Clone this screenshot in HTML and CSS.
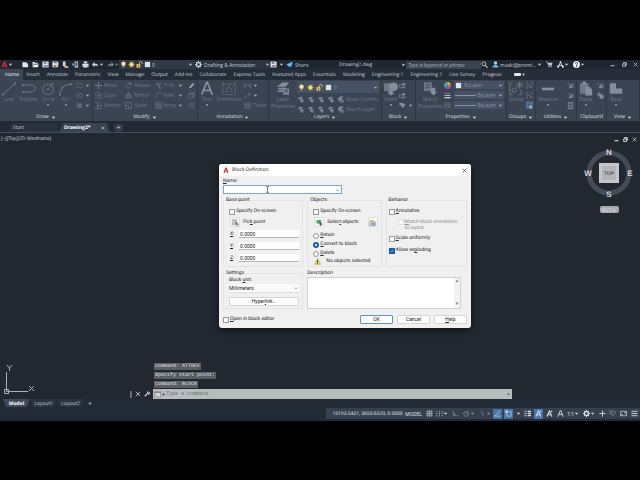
FILE: index.html
```
<!DOCTYPE html>
<html lang="en">
<head>
    <meta charset="UTF-8">
    <meta name="viewport" content="width=device-width, initial-scale=1.0">
    <title>Drawing2.dwg</title>
    <link rel="stylesheet" href="styles.css">
</head>
<body>
    <!-- Shared icons -->
    <svg class="sprite" aria-hidden="true">
        <symbol id="i-caret" viewBox="0 0 6 6"><path d="M1 2h4L3 4.500z" fill="currentColor"/></symbol>
        <symbol id="i-logo" viewBox="0 0 16 16"><path d="M1 15 6.500 1h3L15 15h-4l-1-3H6l2-3h1L8 5 5 15z" fill="#d0273d"/></symbol>
        <symbol id="i-new" viewBox="0 0 16 16"><path d="M1 3h9l4 4v7H1z" fill="#e4e8ee"/><path d="M10 3v4h4" fill="none" stroke="#8893a3"/></symbol>
        <symbol id="i-open" viewBox="0 0 16 16"><path d="M1 2h6l1 2h5v3H5l-4 6z" fill="#c3cad4"/><path d="M5 8h11l-3 6H1z" fill="#f2f4f7"/></symbol>
        <symbol id="i-save" viewBox="0 0 16 16"><path d="M1 1h13l1 2v12H1z" fill="#e0e5ec"/><path d="M4 1h8v5H4zM4 9h9v6H4z" fill="#6b7686"/><path d="M9 2h2v3H9zM5 11h6v1H5z" fill="#fff"/></symbol>
        <symbol id="i-saveas" viewBox="0 0 16 16"><path d="M1 1h12l1 2v11H1z" fill="#e0e5ec"/><path d="M4 1h7v4H4zM4 9h6v5H4z" fill="#6b7686"/><path d="m8 14 1-4 5-5 2 2-5 5z" fill="#e4b56c"/></symbol>
        <symbol id="i-web" viewBox="0 0 16 16"><path d="M2 1h6v11H2z" fill="#d4dae2"/><path d="M5 11h7v4H5z" fill="#e3b165"/><path d="M8 14h7" stroke="#fff" stroke-width="2"/></symbol>
        <symbol id="i-phone" viewBox="0 0 16 16"><path d="M6 1h8v14H6z" fill="#bec8d5"/><path d="M8 3h4v9H8z" fill="#3c4d66"/><path d="m1 4 5 4-5 4z" fill="#63b4ec"/></symbol>
        <symbol id="i-print" viewBox="0 0 16 16"><path d="M4 1h8v4H4zM1 6h14v7H1z" fill="#e6eaf0"/><path d="M4 10h8v5H4z" fill="#fff" stroke="#677486"/></symbol>
        <symbol id="i-undo" viewBox="0 0 16 16"><path d="M6 2v4h4q5 1 4 7-1-3-5-3H6v4L0 8z" fill="currentColor"/></symbol>
        <symbol id="i-redo" viewBox="0 0 16 16"><path d="M10 2v4H6q-5 1-4 7 1-3 5-3h3v4l6-6z" fill="currentColor"/></symbol>
        <symbol id="i-bulb" viewBox="0 0 16 16"><circle cx="8" cy="6" r="5" fill="#ffe28a"/><path d="M6 10h4v2H6z" fill="#ffe28a"/><path d="M6 13h4v2H6z" fill="#b8bec8"/></symbol>
        <symbol id="i-sun" viewBox="0 0 16 16"><path d="M8 0v16M0 8h16M2 2l12 12M14 2 2 14" stroke="#e0b54f" stroke-width="1"/><circle cx="8" cy="8" r="5" fill="#ffd876"/></symbol>
        <symbol id="i-lock" viewBox="0 0 16 16"><path d="M1 7h9v8H1z" fill="#f0c266"/><path d="M8 7V4q0-3 3-3t3 3v3" fill="none" stroke="#d8b878" stroke-width="2"/><path d="M5 9h2v4H5z" fill="#6e5524"/></symbol>
        <symbol id="i-square" viewBox="0 0 16 16"><path d="M2 2h12v12H2z" fill="#dfe2e8"/></symbol>
        <symbol id="i-gear" viewBox="0 0 16 16"><circle cx="8" cy="8" r="4.500" fill="none" stroke="currentColor" stroke-width="3"/><path d="M8 0v4M8 12v4M0 8h4M12 8h4M2.500 2.500l2 2M11.500 11.500l2 2M13.500 2.500l-2 2M4.500 11.500l-2 2" stroke="currentColor" stroke-width="2.500"/></symbol>
        <symbol id="i-plane" viewBox="0 0 16 16"><path d="M0 8 16 1l-4 14-5-4-2 4-1-5z" fill="#4aa6e8"/><path d="M4 10 14 3l-7 8" fill="#bfe1f8"/></symbol>
        <symbol id="i-search" viewBox="0 0 16 16"><circle cx="6.500" cy="6.500" r="4.500" fill="none" stroke="#c8d0da" stroke-width="2"/><path d="m10 10 5 5" stroke="#c8d0da" stroke-width="2.500"/></symbol>
        <symbol id="i-user" viewBox="0 0 16 16"><circle cx="8" cy="4.500" r="4" fill="#9bcdf2"/><path d="M1 15q0-6 7-6t7 6z" fill="#74b6e6"/></symbol>
        <symbol id="i-cart" viewBox="0 0 16 16"><path d="M0 2h3l3 8h7" fill="none" stroke="#c8d0da" stroke-width="1.500"/><path d="M4 4h11l-2 5H6z" fill="#c8d0da"/><circle cx="7" cy="13" r="1.500" fill="#c8d0da"/><circle cx="12" cy="13" r="1.500" fill="#c8d0da"/></symbol>
        <symbol id="i-app" viewBox="0 0 16 16"><path d="M8 2 3 14M8 2l5 12M4 10h8" fill="none" stroke="#e0e5ec" stroke-width="2"/><circle cx="8" cy="2.500" r="2" fill="#e0e5ec"/><circle cx="2.500" cy="13" r="2.500" fill="#e0e5ec"/><circle cx="13.500" cy="13" r="2.500" fill="#e0e5ec"/></symbol>
        <symbol id="i-help" viewBox="0 0 16 16"><circle cx="8" cy="8" r="8" fill="#eef1f5"/><path d="M5.500 6Q5.500 3.500 8 3.500T10.500 6 8 9v1.500" fill="none" stroke="#2b3646" stroke-width="2"/><path d="M7 11.500h2v2H7z" fill="#2b3646"/></symbol>
        <symbol id="i-min" viewBox="0 0 16 16"><path d="M2 12h12" stroke="currentColor" stroke-width="3"/></symbol>
        <symbol id="i-restore" viewBox="0 0 16 16"><path d="M5 5V2h9v8h-3M2 6h9v8H2z" fill="none" stroke="currentColor" stroke-width="2.500"/></symbol>
        <symbol id="i-close" viewBox="0 0 16 16"><path d="m2 2 12 12M14 2 2 14" stroke="currentColor" stroke-width="2"/></symbol>

        <symbol id="i-line" viewBox="0 0 16 16"><path d="M1 15 15 2" stroke="currentColor"/><path d="M0 14h2v2H0zM14 1h2v2h-2z" fill="currentColor"/></symbol>
        <symbol id="i-pline" viewBox="0 0 16 16"><path d="M1 4h9q5 0 5 4t-5 4H2" fill="none" stroke="currentColor"/><path d="M0 11h2v2H0zM0 3h2v2H0z" fill="currentColor"/></symbol>
        <symbol id="i-circle" viewBox="0 0 16 16"><circle cx="8" cy="9" r="6" fill="none" stroke="currentColor"/><path d="m8 9 5-6" stroke="currentColor"/><path d="M7 8h2v2H7zM12 2h2v2h-2z" fill="currentColor"/></symbol>
        <symbol id="i-arc" viewBox="0 0 16 16"><path d="M1 15Q2 3 14 3" fill="none" stroke="currentColor"/><path d="M0 14h2v2H0zM3 6h2v2H3zM13 2h2v2h-2z" fill="currentColor"/></symbol>
        <symbol id="i-rect" viewBox="0 0 16 16"><path d="M2 3h12v10H2z" fill="none" stroke="currentColor" stroke-width="1.500" stroke-dasharray="3 1"/></symbol>
        <symbol id="i-ellipse" viewBox="0 0 16 16"><ellipse cx="8" cy="8" rx="7" ry="5" fill="none" stroke="currentColor" stroke-width="1.500"/><path d="M7 7h2v2H7z" fill="currentColor"/></symbol>
        <symbol id="i-hatch" viewBox="0 0 16 16"><path d="M2 2h12v12H2z" fill="currentColor" opacity=".4"/><path d="M2 6h12M2 10h12M6 2v12M10 2v12" stroke="currentColor"/></symbol>
        <symbol id="i-move" viewBox="0 0 16 16"><path d="M8 0v16M0 8h16" stroke="currentColor" stroke-width="2"/><path d="m5 3 3-3 3 3zm0 10 3 3 3-3zM3 5 0 8l3 3zm10 0 3 3-3 3z" fill="currentColor"/></symbol>
        <symbol id="i-copy" viewBox="0 0 16 16"><circle cx="5" cy="5" r="4" fill="none" stroke="currentColor"/><circle cx="11" cy="11" r="4" fill="none" stroke="currentColor" stroke-width="1.500"/><path d="M11 1v4h4M1 11v4h4" stroke="currentColor" fill="none"/></symbol>
        <symbol id="i-stretch" viewBox="0 0 16 16"><path d="M1 1h5v14H1M6 8h9v7H6z" fill="none" stroke="currentColor" stroke-width="1.500"/><path d="M9 4h6" stroke="currentColor" stroke-dasharray="2 1"/></symbol>
        <symbol id="i-rotate" viewBox="0 0 16 16"><path d="M13 4A6 6 0 1 0 14 9" fill="none" stroke="currentColor" stroke-width="1.500"/><path d="M14 0v6H8z" fill="currentColor"/></symbol>
        <symbol id="i-mirror" viewBox="0 0 16 16"><path d="M6 3v10H0zM10 3v10h6z" fill="none" stroke="currentColor" stroke-width="1.500"/><path d="M8 0v16" stroke="currentColor"/></symbol>
        <symbol id="i-scale" viewBox="0 0 16 16"><path d="M1 1h14v14H1zM1 8h7v7" fill="none" stroke="currentColor" stroke-width="1.500"/></symbol>
        <symbol id="i-trim" viewBox="0 0 16 16"><path d="M1 5h5M6 1l4 14M14 1 8 10" stroke="currentColor" stroke-width="2"/><circle cx="12" cy="13" r="2" fill="none" stroke="currentColor"/></symbol>
        <symbol id="i-fillet" viewBox="0 0 16 16"><path d="M2 15V9q0-7 7-7h6" fill="none" stroke="currentColor" stroke-width="1.500"/></symbol>
        <symbol id="i-array" viewBox="0 0 16 16"><path d="M1 1h6v6H1zM9 1h6v6H9zM1 9h6v6H1zM9 9h6v6H9z" fill="none" stroke="currentColor" stroke-width="1.500"/></symbol>
        <symbol id="i-erase" viewBox="0 0 16 16"><path d="m2 13 9-11 3 3L6 14z" fill="#a3abb6"/></symbol>
        <symbol id="i-box" viewBox="0 0 16 16"><path d="M1 5h9v9H1zM1 5l4-3h10v8l-5 4M10 5l5-3" fill="none" stroke="currentColor" stroke-width="1.500"/></symbol>
        <symbol id="i-offset" viewBox="0 0 16 16"><path d="M15 3H7q-5 0-5 5t5 5h8M15 6H8q-3 0-3 2t3 2h7" fill="none" stroke="currentColor"/></symbol>
        <symbol id="i-text" viewBox="0 0 16 16"><path d="M2 15 7.500 1h1L14 15M4 10h8" fill="none" stroke="currentColor" stroke-width="2"/></symbol>
        <symbol id="i-dim" viewBox="0 0 16 16"><path d="M1 1v14M15 1v14M1 3h14M4 15h8" stroke="currentColor" stroke-dasharray="2 1"/><path d="m4 7 2 2m6-2-2 2M8 5v3m-4 4 2-1m6 1-2-1" stroke="currentColor"/></symbol>
        <symbol id="i-lin" viewBox="0 0 16 16"><path d="M2 2v12M14 2v12M2 8h12" stroke="currentColor" stroke-width="1.500"/></symbol>
        <symbol id="i-leader" viewBox="0 0 16 16"><path d="m2 14 6-8h4" stroke="currentColor" fill="none"/><circle cx="13" cy="5" r="2.500" fill="none" stroke="currentColor"/><path d="m1 15 1-5 3 3z" fill="currentColor"/></symbol>
        <symbol id="i-table" viewBox="0 0 16 16"><path d="M1 2h14v12H1zM1 6h14M1 10h14M6 2v12M11 2v12" fill="none" stroke="currentColor"/></symbol>
        <symbol id="i-layers" viewBox="0 0 16 16"><path d="m1 6 6-5h8l-4 5zM1 9l3-2h8l-2 2zm0 3 3-2h8l-2 2z" fill="currentColor"/><path d="M8 8h7v7H8z" fill="currentColor"/><path d="M9 10h5m-5 2h5" stroke="#3b4453"/></symbol>
        <symbol id="i-layer" viewBox="0 0 16 16"><path d="m1 6 5-4h8l-4 4zM5 8h6l2 2-3 4z" fill="currentColor"/><path d="M9 7h6v8H9z" fill="currentColor" opacity=".7"/></symbol>
        <symbol id="i-insert" viewBox="0 0 16 16"><path d="M0 2h8v9H0z" fill="currentColor" opacity=".7"/><circle cx="11" cy="6" r="5" fill="currentColor"/><path d="M5 10h5v3h2l-4 3-4-3h1z" fill="currentColor"/></symbol>
        <symbol id="i-block" viewBox="0 0 16 16"><path d="M1 6h7v7H1z" fill="none" stroke="currentColor" stroke-width="1.500"/><circle cx="11" cy="5" r="3" fill="currentColor"/><path d="m8 14 6-5v5z" fill="currentColor"/></symbol>
        <symbol id="i-tag" viewBox="0 0 16 16"><path d="M1 2h8l6 5-7 7-3-6H1z" fill="currentColor"/></symbol>
        <symbol id="i-match" viewBox="0 0 16 16"><path d="M1 1h9v10H1z" fill="currentColor" opacity=".7"/><path d="M3 4h5M3 7h5" stroke="#3b4453"/><path d="M9 7h5v5h2l-4 4-4-4h1z" fill="currentColor"/></symbol>
        <symbol id="i-wheel" viewBox="0 0 16 16"><path d="M8 8V0a8 8 0 0 1 7 4z" fill="#e8c33f"/><path d="m8 8 7-4a8 8 0 0 1 0 8z" fill="#e56c3e"/><path d="m8 8 7 4a8 8 0 0 1-7 4z" fill="#cf4f9e"/><path d="M8 8v8a8 8 0 0 1-7-4z" fill="#6a66d0"/><path d="m8 8-7 4a8 8 0 0 1 0-8z" fill="#38a7dc"/><path d="M8 8 1 4a8 8 0 0 1 7-4z" fill="#59bd66"/></symbol>
        <symbol id="i-lines" viewBox="0 0 16 16"><path d="M1 3h14" stroke="currentColor"/><path d="M1 8h14" stroke="currentColor" stroke-width="2"/><path d="M1 13h14" stroke="currentColor" stroke-width="3"/></symbol>
        <symbol id="i-group" viewBox="0 0 16 16"><path d="M4 2H1v13h3M11 15h3V9" fill="none" stroke="currentColor"/><circle cx="6" cy="10" r="2.500" fill="none" stroke="currentColor"/><path d="M12 0v8M8 4h8M9 1l6 6M15 1 9 7" stroke="currentColor"/></symbol>
        <symbol id="i-ungroup" viewBox="0 0 16 16"><path d="M5 1H2v13h3M11 1h3v5M8 4v4H5m4 1 5 5m-5 0 5-5" fill="none" stroke="currentColor" stroke-width="1.500"/></symbol>
        <symbol id="i-select" viewBox="0 0 16 16"><path d="M2 2h12v11H2z" fill="none" stroke="currentColor" stroke-dasharray="2 1"/><path d="m8 6 7 6h-3l1 3-2 1-1-3-2 2z" fill="currentColor"/></symbol>
        <symbol id="i-measure" viewBox="0 0 16 16"><path d="M1 7h14v3H1z" fill="currentColor"/></symbol>
        <symbol id="i-calc" viewBox="0 0 16 16"><path d="M3 1h10v14H3z" fill="none" stroke="currentColor" stroke-width="2"/><path d="M5 4h6M5 8h6M5 11h6" stroke="currentColor" stroke-width="1.500"/></symbol>
        <symbol id="i-quick" viewBox="0 0 16 16"><path d="M1 3h5M1 6h4" stroke="currentColor"/><path d="M7 4h8v10H7z" fill="currentColor" opacity=".6"/><path d="m4 14 3-8 3 8z" fill="currentColor"/></symbol>
        <symbol id="i-paste" viewBox="0 0 16 16"><path d="M1 2h10v12H1z" fill="currentColor" opacity=".7"/><path d="M4 0h4v4H4zM7 6h5l3 3v7H7z" fill="currentColor"/></symbol>
        <symbol id="i-pages" viewBox="0 0 16 16"><path d="M1 1h7v9H1z" fill="currentColor" opacity=".7"/><path d="M6 5h5l4 4v6H6z" fill="currentColor"/></symbol>
        <symbol id="i-base" viewBox="0 0 16 16"><path d="M1 2h7v6h7v6H1z" fill="currentColor"/></symbol>

        <symbol id="i-grid" viewBox="0 0 16 16"><path d="M4 0v16M8 0v16M12 0v16M0 4h16M0 8h16M0 12h16" stroke="currentColor"/></symbol>
        <symbol id="i-dots" viewBox="0 0 16 16"><path d="M1 2h2v2H1zM7 2h2v2H7zM13 2h2v2h-2zM1 7h2v2H1zM7 7h2v2H7zM13 7h2v2h-2zM1 12h2v2H1zM7 12h2v2H7zM13 12h2v2h-2z" fill="currentColor"/></symbol>
        <symbol id="i-ortho" viewBox="0 0 16 16"><path d="M3 1v12h12M3 9h4v4" fill="none" stroke="currentColor" stroke-width="1.500"/></symbol>
        <symbol id="i-polar" viewBox="0 0 16 16"><circle cx="7" cy="9" r="5.500" fill="none" stroke="currentColor" stroke-width="1.500"/><path d="M7 9h8M7 9l6-8" stroke="currentColor"/></symbol>
        <symbol id="i-iso" viewBox="0 0 16 16"><path d="M8 1v14M3 4l5 4 4 4" stroke="currentColor" fill="none"/></symbol>
        <symbol id="i-track" viewBox="0 0 16 16"><path d="M1 14h14M2 14 14 2" stroke="currentColor" stroke-width="1.500"/></symbol>
        <symbol id="i-snap" viewBox="0 0 16 16"><path d="M4 4h10v10H4z" fill="none" stroke="currentColor" stroke-width="1.500"/><path d="M1 1h5v5H1z" fill="currentColor"/></symbol>
        <symbol id="i-weight" viewBox="0 0 16 16"><path d="M0 3h8M0 8h8M0 13h8" stroke="currentColor" stroke-width="1.500"/><path d="M9 3h7M9 8h7M9 13h7" stroke="currentColor" stroke-width="3"/></symbol>
        <symbol id="i-anno" viewBox="0 0 16 16"><path d="M2 15 8 2l5 13M4 11h7" fill="none" stroke="currentColor" stroke-width="2.500"/><path d="m11 1 4 1-3 4z" fill="currentColor"/></symbol>
        <symbol id="i-plus" viewBox="0 0 16 16"><path d="M8 1v14M1 8h14" stroke="currentColor" stroke-width="2"/></symbol>
        <symbol id="i-isolate" viewBox="0 0 16 16"><path d="M1 2h6v6H1zM9 3h5v5l-5 6-4-5" fill="none" stroke="currentColor" stroke-width="1.500"/></symbol>
        <symbol id="i-clean" viewBox="0 0 16 16"><path d="M1 3h14v10H1z" fill="none" stroke="currentColor" stroke-width="1.500"/><path d="M9 5h4v4zM3 8v3h4z" fill="currentColor"/></symbol>
        <symbol id="i-menu" viewBox="0 0 16 16"><path d="M1 3h14M1 8h14M1 13h14" stroke="currentColor" stroke-width="2"/></symbol>
        <symbol id="i-wrench" viewBox="0 0 16 16"><path d="m2 14 7-7" stroke="currentColor" stroke-width="3"/><path d="M14 2 12 5l-2-2 2-2Q8 0 8 4t4 5q4 0 4-4z" fill="currentColor"/></symbol>
        <symbol id="i-console" viewBox="0 0 16 16"><path d="M1 2h14v12H1z" fill="#d8d8d8" stroke="#666"/><path d="M1 3h14" stroke="#666" stroke-width="2"/><path d="m3 7 3 2-3 2M7 12h4" fill="none" stroke="#666"/></symbol>
        <symbol id="i-ibeam" viewBox="0 0 16 16"><path d="M5 1q3 0 3 2 0-2 3-2M8 3v10M5 15q3 0 3-2 0 2 3 2" fill="none" stroke="#333" stroke-width="1.500"/></symbol>
        <symbol id="i-pick" viewBox="0 0 16 16"><path d="M1 1h10v12H1z" fill="#d7dce0" stroke="#727a80"/><path d="M3 4h6M3 7h6M3 10h6" stroke="#8e979c"/><path d="m7 5 7 6-3 1-1 3z" fill="#8b4c74"/><path d="M10 12h5v3h-5z" fill="#5c8f4e"/></symbol>
        <symbol id="i-objects" viewBox="0 0 16 16"><path d="M1 2h11v8H1z" fill="#45ad6b"/><path d="m8 6 7 6-3 1-1 3-3-3z" fill="#3d5060"/></symbol>
        <symbol id="i-qselect" viewBox="0 0 16 16"><path d="M1 6h14v9H1z" fill="#d3dae2" stroke="#75818e"/><path d="M6 8h7v6H6z" fill="#789bc4"/><path d="m2 1 5 2 4-2-2 5-5 1z" fill="#e5a83a"/></symbol>
        <symbol id="i-warn" viewBox="0 0 16 16"><path d="M8 1 15 14.500H1z" fill="#e5ed2c" stroke="#83862c"/><path d="M8 5v5M8 11.500v2" stroke="#222" stroke-width="2"/></symbol>
    </svg>

    <div class="app">
        <!-- Title bar -->
        <header class="titlebar">
            <div class="quick">
                <button class="logo" aria-label="Application menu"><svg><use href="#i-logo"/></svg><svg class="caret"><use href="#i-caret"/></svg></button>
                <button aria-label="New"><svg><use href="#i-new"/></svg></button>
                <button aria-label="Open"><svg><use href="#i-open"/></svg></button>
                <button aria-label="Save"><svg><use href="#i-save"/></svg></button>
                <button aria-label="Save as"><svg><use href="#i-saveas"/></svg></button>
                <button aria-label="Open from web"><svg><use href="#i-web"/></svg></button>
                <button aria-label="Save to mobile"><svg><use href="#i-phone"/></svg></button>
                <button aria-label="Plot"><svg><use href="#i-print"/></svg></button>
                <button aria-label="Undo"><svg><use href="#i-undo"/></svg><svg class="caret"><use href="#i-caret"/></svg></button>
                <button class="off" aria-label="Redo"><svg><use href="#i-redo"/></svg><svg class="caret"><use href="#i-caret"/></svg></button>
            </div>
            <button class="layer-combo" aria-label="Layer">
                <svg><use href="#i-bulb"/></svg><svg><use href="#i-sun"/></svg><svg><use href="#i-lock"/></svg><svg><use href="#i-square"/></svg><span>0</span><svg class="caret push"><use href="#i-caret"/></svg>
            </button>
            <button class="workspace"><svg><use href="#i-gear"/></svg><span>Drafting &amp; Annotation</span><svg class="caret push"><use href="#i-caret"/></svg></button>
            <div class="share">
                <button aria-label="Save workspace"><svg><use href="#i-save"/></svg></button>
                <button aria-label="Customize"><svg class="caret"><use href="#i-caret"/></svg></button>
                <button class="share-btn"><svg><use href="#i-plane"/></svg>Share</button>
            </div>
            <div class="doc-title"><span>Drawing2.dwg</span><span class="arrow">▸</span></div>
            <input class="search" type="text" placeholder="Type a keyword or phrase" aria-label="Search">
            <div class="account">
                <button aria-label="Search help"><svg><use href="#i-search"/></svg></button>
                <button class="user"><svg><use href="#i-user"/></svg>mzaki@promi...<svg class="caret"><use href="#i-caret"/></svg></button>
                <button aria-label="Store"><svg><use href="#i-cart"/></svg></button>
                <button aria-label="Apps"><svg><use href="#i-app"/></svg><svg class="caret"><use href="#i-caret"/></svg></button>
                <button aria-label="Help"><svg><use href="#i-help"/></svg><svg class="caret"><use href="#i-caret"/></svg></button>
            </div>
            <div class="window-btns">
                <button aria-label="Minimize"><svg><use href="#i-min"/></svg></button>
                <button aria-label="Restore"><svg><use href="#i-restore"/></svg></button>
                <button aria-label="Close"><svg><use href="#i-close"/></svg></button>
            </div>
        </header>

        <!-- Ribbon tabs -->
        <nav class="ribbon-tabs">
            <a class="active" href="#">Home</a>
            <a href="#">Insert</a>
            <a href="#">Annotate</a>
            <a href="#">Parametric</a>
            <a href="#">View</a>
            <a href="#">Manage</a>
            <a href="#">Output</a>
            <a href="#">Add-ins</a>
            <a href="#">Collaborate</a>
            <a href="#">Express Tools</a>
            <a href="#">Featured Apps</a>
            <a href="#">Essentials</a>
            <a href="#">Modeling</a>
            <a href="#">Engineering 1</a>
            <a href="#">Engineering 2</a>
            <a href="#">Live Survey</a>
            <a href="#">Progeox</a>
            <button class="ribbon-toggle" aria-label="Minimize ribbon"><span class="pill"></span><svg class="caret"><use href="#i-caret"/></svg></button>
        </nav>

        <!-- Ribbon panels -->
        <div class="ribbon">
            <section class="panel">
                <div class="tools">
                    <button class="big"><svg><use href="#i-line"/></svg>Line</button>
                    <button class="big"><svg><use href="#i-pline"/></svg>Polyline</button>
                    <button class="big"><svg><use href="#i-circle"/></svg>Circle<svg class="caret"><use href="#i-caret"/></svg></button>
                    <button class="big"><svg><use href="#i-arc"/></svg>Arc<svg class="caret"><use href="#i-caret"/></svg></button>
                    <div class="stack">
                        <button aria-label="Rectangle"><svg><use href="#i-rect"/></svg><svg class="caret"><use href="#i-caret"/></svg></button>
                        <button aria-label="Ellipse"><svg><use href="#i-ellipse"/></svg><svg class="caret"><use href="#i-caret"/></svg></button>
                        <button aria-label="Hatch"><svg><use href="#i-hatch"/></svg><svg class="caret"><use href="#i-caret"/></svg></button>
                    </div>
                </div>
                <h2>Draw <svg class="caret"><use href="#i-caret"/></svg></h2>
            </section>
            <section class="panel">
                <div class="tools">
                    <div class="stack">
                        <button><svg><use href="#i-move"/></svg>Move</button>
                        <button><svg><use href="#i-copy"/></svg>Copy</button>
                        <button><svg><use href="#i-stretch"/></svg>Stretch</button>
                    </div>
                    <div class="stack">
                        <button><svg><use href="#i-rotate"/></svg>Rotate</button>
                        <button><svg><use href="#i-mirror"/></svg>Mirror</button>
                        <button><svg><use href="#i-scale"/></svg>Scale</button>
                    </div>
                    <div class="stack">
                        <button><svg><use href="#i-trim"/></svg>Trim<svg class="caret push"><use href="#i-caret"/></svg></button>
                        <button><svg><use href="#i-fillet"/></svg>Fillet<svg class="caret push"><use href="#i-caret"/></svg></button>
                        <button><svg><use href="#i-array"/></svg>Array<svg class="caret push"><use href="#i-caret"/></svg></button>
                    </div>
                    <div class="stack">
                        <button aria-label="Erase"><svg><use href="#i-erase"/></svg></button>
                        <button aria-label="Explode"><svg><use href="#i-box"/></svg></button>
                        <button aria-label="Offset"><svg><use href="#i-offset"/></svg></button>
                    </div>
                </div>
                <h2>Modify <svg class="caret"><use href="#i-caret"/></svg></h2>
            </section>
            <section class="panel">
                <div class="tools">
                    <button class="big bright"><svg><use href="#i-text"/></svg>Text<svg class="caret"><use href="#i-caret"/></svg></button>
                    <button class="big"><svg><use href="#i-dim"/></svg>Dimension</button>
                    <div class="stack">
                        <button aria-label="Linear"><svg><use href="#i-lin"/></svg><svg class="caret"><use href="#i-caret"/></svg></button>
                        <button aria-label="Leader"><svg><use href="#i-leader"/></svg><svg class="caret"><use href="#i-caret"/></svg></button>
                        <button><svg><use href="#i-table"/></svg>Table</button>
                    </div>
                </div>
                <h2>Annotation <svg class="caret"><use href="#i-caret"/></svg></h2>
            </section>
            <section class="panel">
                <div class="tools">
                    <button class="big bright"><svg><use href="#i-layers"/></svg><span>Layer<br>Properties</span></button>
                    <div class="stack wide bright">
                        <button class="combo" aria-label="Current layer"><svg><use href="#i-bulb"/></svg><svg><use href="#i-sun"/></svg><svg><use href="#i-lock"/></svg><svg><use href="#i-square"/></svg>0<svg class="caret push"><use href="#i-caret"/></svg></button>
                        <div class="row">
                            <button aria-label="Off"><svg><use href="#i-layer"/></svg></button>
                            <button aria-label="Isolate"><svg><use href="#i-layer"/></svg></button>
                            <button aria-label="Freeze"><svg><use href="#i-layer"/></svg></button>
                            <button aria-label="Lock"><svg><use href="#i-layer"/></svg></button>
                            <button><svg><use href="#i-layers"/></svg>Make Current</button>
                        </div>
                        <div class="row">
                            <button aria-label="Turn all on"><svg><use href="#i-layer"/></svg></button>
                            <button aria-label="Unisolate"><svg><use href="#i-layer"/></svg></button>
                            <button aria-label="Thaw"><svg><use href="#i-layer"/></svg></button>
                            <button aria-label="Unlock"><svg><use href="#i-layer"/></svg></button>
                            <button><svg><use href="#i-layers"/></svg>Match Layer</button>
                        </div>
                    </div>
                </div>
                <h2>Layers <svg class="caret"><use href="#i-caret"/></svg></h2>
            </section>
            <section class="panel">
                <div class="tools">
                    <button class="big bright"><svg><use href="#i-insert"/></svg>Insert<svg class="caret"><use href="#i-caret"/></svg></button>
                    <div class="stack bright">
                        <button aria-label="Create block"><svg><use href="#i-block"/></svg></button>
                        <button aria-label="Edit block"><svg><use href="#i-block"/></svg></button>
                        <button aria-label="Edit attributes"><svg><use href="#i-tag"/></svg><svg class="caret"><use href="#i-caret"/></svg></button>
                    </div>
                </div>
                <h2>Block <svg class="caret"><use href="#i-caret"/></svg></h2>
            </section>
            <section class="panel">
                <div class="tools">
                    <button class="big bright"><svg><use href="#i-match"/></svg><span>Match<br>Properties</span></button>
                    <div class="stack wide">
                        <div class="row"><svg><use href="#i-wheel"/></svg><button class="combo" aria-label="Color"><svg><use href="#i-square"/></svg>ByLayer<svg class="caret push"><use href="#i-caret"/></svg></button></div>
                        <div class="row"><svg class="light"><use href="#i-lines"/></svg><button class="combo" aria-label="Lineweight"><span class="rule"></span>ByLayer<svg class="caret push"><use href="#i-caret"/></svg></button></div>
                        <div class="row"><svg><use href="#i-table"/></svg><button class="combo" aria-label="Linetype"><span class="rule"></span>ByLayer<svg class="caret push"><use href="#i-caret"/></svg></button></div>
                    </div>
                </div>
                <h2>Properties <svg class="caret"><use href="#i-caret"/></svg></h2>
            </section>
            <section class="panel">
                <div class="tools">
                    <button class="big"><svg><use href="#i-group"/></svg>Group</button>
                    <div class="stack">
                        <button aria-label="Ungroup"><svg><use href="#i-ungroup"/></svg></button>
                        <button aria-label="Group edit"><svg><use href="#i-ungroup"/></svg></button>
                        <button class="on" aria-label="Group selection"><svg><use href="#i-select"/></svg></button>
                    </div>
                </div>
                <h2>Groups <svg class="caret"><use href="#i-caret"/></svg></h2>
            </section>
            <section class="panel">
                <div class="tools">
                    <button class="big bright"><svg><use href="#i-measure"/></svg>Measure<svg class="caret"><use href="#i-caret"/></svg></button>
                    <div class="stack bright">
                        <button aria-label="Quick select"><svg><use href="#i-quick"/></svg></button>
                        <button aria-label="Select all"><svg><use href="#i-quick"/></svg></button>
                        <button aria-label="Calculator"><svg><use href="#i-calc"/></svg></button>
                    </div>
                </div>
                <h2>Utilities <svg class="caret"><use href="#i-caret"/></svg></h2>
            </section>
            <section class="panel">
                <div class="tools">
                    <button class="big bright"><svg><use href="#i-paste"/></svg>Paste<svg class="caret"><use href="#i-caret"/></svg></button>
                    <div class="stack bright">
                        <button aria-label="Cut"><svg><use href="#i-quick"/></svg></button>
                        <button aria-label="Copy clip"><svg><use href="#i-pages"/></svg></button>
                    </div>
                </div>
                <h2>Clipboard</h2>
            </section>
            <section class="panel">
                <div class="tools">
                    <button class="big bright"><svg><use href="#i-base"/></svg>Base<svg class="caret"><use href="#i-caret"/></svg></button>
                </div>
                <h2>View <svg class="caret"><use href="#i-caret"/></svg></h2>
            </section>
        </div>

        <!-- Drawing tabs -->
        <nav class="doc-tabs">
            <a href="#">Start</a>
            <a class="active" href="#">Drawing2*<svg><use href="#i-close"/></svg></a>
            <button aria-label="New drawing">+</button>
        </nav>

        <!-- Drawing area -->
        <main class="canvas">
            <div class="view-label">[−][Top][2D Wireframe]</div>
            <div class="view-btns">
                <button aria-label="Minimize view"><svg><use href="#i-min"/></svg></button>
                <button aria-label="Restore view"><svg><use href="#i-restore"/></svg></button>
                <button aria-label="Close view"><svg><use href="#i-close"/></svg></button>
            </div>

            <div class="viewcube">
                <svg class="compass" viewBox="0 0 50 50">
                    <circle cx="25" cy="25" r="20" fill="none" stroke="#454c57" stroke-width="5"/>
                    <path d="M15 15h20v20H15z" fill="#c4c6c8"/>
                    <path d="M18 18h14v14H18z" fill="#b2b5b9"/>
                    <g class="compass-text" text-anchor="middle">
                        <text x="25" y="7">N</text>
                        <text x="4" y="28">W</text>
                        <text x="46" y="28">E</text>
                        <text x="25" y="49">S</text>
                        <text class="face" x="25" y="27">TOP</text>
                    </g>
                </svg>
                <button class="wcs">WCS ▾</button>
            </div>

            <svg class="ucs" viewBox="0 0 36 34">
                <path d="M6.500 10v19.500H28M4.500 27.500h4v4h-4z" fill="none" stroke="#a9b0b8"/>
                <path d="m7 3 2.500 3L12 3M9.500 6v3M29 24l5 5M34 24l-5 5" fill="none" stroke="#a9b0b8"/>
            </svg>

            <div class="command">
                <div class="history">
                    <span>Command: ATTDEF</span>
                    <span>Specify start point:</span>
                    <span>Command: BLOCK</span>
                </div>
                <div class="command-bar">
                    <span class="grip"></span>
                    <button aria-label="Close command line"><svg><use href="#i-close"/></svg></button>
                    <button aria-label="Customize command line"><svg><use href="#i-wrench"/></svg></button>
                    <label class="command-input"><svg><use href="#i-console"/></svg><svg class="caret"><use href="#i-caret"/></svg><input type="text" placeholder="Type a command" aria-label="Command"><span>▴</span></label>
                </div>
            </div>

            <!-- Block definition dialog -->
            <form class="dialog" role="dialog" aria-labelledby="dialog-title">
                <div class="dialog-head">
                    <svg><use href="#i-logo"/></svg>
                    <h1 id="dialog-title">Block Definition</h1>
                    <button type="button" aria-label="Close dialog"><svg><use href="#i-close"/></svg></button>
                </div>
                <div class="dialog-body">
                    <div class="name-field">
                        <label for="block-name"><u>N</u>ame:</label>
                        <select id="block-name"><option></option></select>
                        <svg class="ibeam"><use href="#i-ibeam"/></svg>
                    </div>
                    <div class="groups">
                        <fieldset>
                            <legend>Base point</legend>
                            <label class="check"><input type="checkbox">Specify On-screen</label>
                            <div class="pick"><button type="button" aria-label="Pick point"><svg><use href="#i-pick"/></svg></button><span>Pic<u>k</u> point</span></div>
                            <div class="coord"><label for="x"><u>X</u>:</label><input id="x" type="text" value="0.0000"></div>
                            <div class="coord"><label for="y"><u>Y</u>:</label><input id="y" type="text" value="0.0000"></div>
                            <div class="coord"><label for="z"><u>Z</u>:</label><input id="z" type="text" value="0.0000"></div>
                        </fieldset>
                        <fieldset>
                            <legend>Objects</legend>
                            <label class="check"><input type="checkbox">Specify On-screen</label>
                            <div class="pick"><button type="button" aria-label="Select objects"><svg><use href="#i-objects"/></svg></button><span>Selec<u>t</u> objects</span><button class="push" type="button" aria-label="Quick select objects"><svg><use href="#i-qselect"/></svg></button></div>
                            <div class="modes">
                                <label class="check"><input type="radio" name="mode"><span><u>R</u>etain</span></label>
                                <label class="check"><input type="radio" name="mode" checked><span><u>C</u>onvert to block</span></label>
                                <label class="check"><input type="radio" name="mode"><span><u>D</u>elete</span></label>
                                <div class="warn"><svg><use href="#i-warn"/></svg>No objects selected</div>
                            </div>
                        </fieldset>
                        <fieldset class="behavior">
                            <legend>Behavior</legend>
                            <label class="check"><input type="checkbox"><span><u>A</u>nnotative</span></label>
                            <label class="check sub"><input type="checkbox" disabled><span><u>M</u>atch block orientation<br>to layout</span></label>
                            <label class="check"><input type="checkbox"><span><u>S</u>cale uniformly</span></label>
                            <label class="check"><input type="checkbox" checked><span>Allow ex<u>p</u>loding</span></label>
                        </fieldset>
                    </div>
                    <div class="lower">
                        <fieldset class="settings">
                            <legend>Settings</legend>
                            <label for="unit">Block <u>u</u>nit:</label>
                            <select id="unit"><option>Millimeters</option></select>
                            <button class="btn" type="button">Hyper<u>l</u>ink...</button>
                        </fieldset>
                        <div class="description">
                            <label for="desc">Description</label>
                            <div class="desc-box"><textarea id="desc"></textarea><div class="scroll"><span>▴</span><span>▾</span></div></div>
                        </div>
                    </div>
                    <div class="dialog-foot">
                        <label class="check"><input type="checkbox"><span><u>O</u>pen in block editor</span></label>
                        <button class="btn primary" type="button">OK</button>
                        <button class="btn" type="button">Cancel</button>
                        <button class="btn" type="button"><u>H</u>elp</button>
                    </div>
                </div>
            </form>
        </main>

        <!-- Layout tabs and status bar -->
        <footer class="bottom">
            <nav class="layout-tabs">
                <a class="active" href="#">Model</a>
                <a href="#">Layout1</a>
                <a href="#">Layout2</a>
                <button aria-label="New layout">+</button>
            </nav>
            <div class="status">
                <span class="coords">15193.5431, 3650.6320, 0.0000</span>
                <button class="model">MODEL</button>
                <button aria-label="Grid"><svg><use href="#i-grid"/></svg></button>
                <button aria-label="Snap"><svg><use href="#i-dots"/></svg><svg class="caret"><use href="#i-caret"/></svg></button>
                <button class="off" aria-label="Ortho"><svg><use href="#i-ortho"/></svg></button>
                <button class="off" aria-label="Polar"><svg><use href="#i-polar"/></svg><svg class="caret"><use href="#i-caret"/></svg></button>
                <button class="off" aria-label="Isoplane"><svg><use href="#i-iso"/></svg><svg class="caret"><use href="#i-caret"/></svg></button>
                <button class="on" aria-label="Tracking"><svg><use href="#i-track"/></svg></button>
                <button class="on" aria-label="Object snap"><svg><use href="#i-snap"/></svg></button>
                <button aria-label="Snap menu"><svg class="caret"><use href="#i-caret"/></svg></button>
                <button aria-label="Lineweight display"><svg><use href="#i-weight"/></svg></button>
                <button class="on" aria-label="Annotation visibility"><svg><use href="#i-anno"/></svg></button>
                <button aria-label="Auto scale"><svg><use href="#i-anno"/></svg></button>
                <button aria-label="Annotation scale"><svg><use href="#i-text"/></svg></button>
                <button>1:1<svg class="caret"><use href="#i-caret"/></svg></button>
                <button aria-label="Workspace"><svg><use href="#i-gear"/></svg><svg class="caret"><use href="#i-caret"/></svg></button>
                <button aria-label="Monitor"><svg><use href="#i-plus"/></svg></button>
                <button class="off" aria-label="Isolate objects"><svg><use href="#i-isolate"/></svg></button>
                <button aria-label="Clean screen"><svg><use href="#i-clean"/></svg></button>
                <button aria-label="Customization"><svg><use href="#i-menu"/></svg></button>
            </div>
        </footer>
    </div>
</body>
</html>
```

FILE: styles.css
```
* {
    box-sizing: border-box;
}
body {
    margin: 0;
    background-color: #000;
    color: #c9d0d9;
    font-family: "Open Sans", "Noto Sans", sans-serif;
    font-size: 5px;
    line-height: 8px;
    text-rendering: geometricPrecision;
}
.sprite {
    display: none;
}
svg {
    width: 7px;
    height: 7px;
    flex: none;
}
svg.caret {
    width: 5px;
    height: 5px;
}
button, input, select, textarea {
    margin: 0;
    padding: 0;
    border: none;
    background: none;
    color: inherit;
    font: inherit;
}
button {
    display: flex;
    align-items: center;
    white-space: nowrap;
}
a {
    color: inherit;
    text-decoration: none;
    white-space: nowrap;
}
h1, h2 {
    margin: 0;
    font-size: 5px;
    font-weight: normal;
}
.push {
    margin-left: auto;
}
.app {
    margin-top: 60px;
    background-color: #222933;
}

/* Title bar */
.titlebar {
    display: grid;
    grid-template-columns: 119fr 75fr 76fr 62fr 74fr 75fr 128fr 31fr;
    align-items: center;
    height: 9px;
    background-color: #202731;
}
.titlebar > * {
    min-width: 0;
}
.quick, .share, .account, .window-btns {
    display: flex;
    align-items: center;
}
.quick {
    gap: 3px;
}
.logo {
    padding: 0 6px 0 1px;
}
.off {
    color: #7b8491;
}
.layer-combo {
    gap: 1px;
    padding: 0 1px;
    height: 9px;
    background-color: #303947;
}
.workspace {
    gap: 2px;
    height: 9px;
    padding-left: 1px;
    background-color: #2b3441;
}
.share {
    gap: 2px;
}
.share-btn {
    gap: 2px;
    color: #a9c6dd;
}
.doc-title {
    display: flex;
    justify-content: space-between;
    padding: 0 1px 0 7px;
}
.search {
    width: 100%;
    height: 8px;
    padding: 0 2px;
    background-color: #394351;
}
.search::placeholder {
    color: #a9b1bc;
    font-style: italic;
}
.account {
    gap: 4px;
}
.user {
    gap: 1px;
}
.window-btns {
    justify-content: space-between;
    padding: 0 2px 0 1px;
}
.window-btns svg, .view-btns svg {
    width: 5px;
    height: 5px;
}

/* Ribbon tabs */
.ribbon-tabs {
    display: flex;
    gap: 7px;
    height: 11px;
    line-height: 12px;
    background-color: #252d38;
}
.ribbon-tabs .active {
    padding: 0 4px 0 5px;
    margin-right: -4px;
    background-color: #3d4656;
    color: #fff;
}
.ribbon-toggle {
    margin-left: 5px;
}
.pill {
    width: 7px;
    height: 3px;
    border-radius: 1px;
    background-color: #e3e7ec;
}

/* Ribbon */
.ribbon {
    display: grid;
    grid-template-columns: 93fr 105fr 71fr 113fr 34fr 91fr 29fr 41fr 30fr 33fr;
    height: 41px;
    background-color: #3b4453;
}
.panel {
    display: flex;
    flex-direction: column;
    min-width: 0;
    overflow: hidden;
    border-right: 1px solid #2f3743;
}
.panel h2 {
    display: flex;
    align-items: center;
    justify-content: center;
    gap: 2px;
    height: 8px;
    color: #dde1e7;
}
.tools {
    display: flex;
    flex: 1;
    justify-content: space-between;
    min-height: 0;
    padding: 1px 2px 0;
    color: #6f7988;
}
.big {
    flex-direction: column;
    line-height: 7px;
}
.big > svg {
    width: 14px;
    height: 15px;
}
.big > svg.caret {
    width: 4px;
    height: 4px;
    color: #aab1bb;
}
.bright svg {
    color: #858d9a;
}
.stack {
    display: flex;
    flex-direction: column;
    gap: 2px;
}
.stack button {
    gap: 2px;
    height: 8px;
}
.stack .caret {
    color: #a7aeb8;
}
.wide {
    flex: 1;
    min-width: 0;
    margin-left: 2px;
}
.row {
    display: flex;
    align-items: center;
    gap: 3px;
    height: 8px;
}
.stack .combo {
    flex: 1;
    min-width: 0;
    padding: 0 1px;
    background-color: #465163;
    color: #8993a1;
}
.rule {
    flex: 1;
    height: 1px;
    background-color: #8a93a0;
}
.light {
    color: #c5cbd4;
}
.stack .on {
    background-color: #42617f;
    color: #9fc8ec;
}

/* Drawing tabs */
.doc-tabs {
    display: flex;
    align-items: flex-end;
    height: 12px;
    padding-left: 8px;
    border-bottom: 1px solid #454e5c;
    line-height: 10px;
}
.doc-tabs a {
    width: 51px;
    height: 9px;
    padding-left: 5px;
    background-color: #2a323e;
    clip-path: polygon(4px 0, calc(100% - 3px) 0, 100% 100%, 0 100%);
}
.doc-tabs .active {
    display: flex;
    align-items: center;
    justify-content: space-between;
    padding: 0 5px;
    background-color: #3a4352;
    color: #fff;
    font-weight: bold;
}
.doc-tabs svg {
    width: 4px;
    height: 4px;
}
.doc-tabs button {
    width: 9px;
    height: 8px;
    margin-left: 4px;
    justify-content: center;
    border-radius: 3px;
    background-color: #333c48;
    font-size: 7px;
}

/* Drawing area */
.canvas {
    position: relative;
    height: 266px;
    background-color: #212830;
}
.view-label {
    padding: 2px 1px;
    font-family: "Liberation Sans", sans-serif;
}
.view-btns {
    position: absolute;
    top: 4px;
    right: 3px;
    display: flex;
    gap: 4px;
    color: #fff;
}
.viewcube {
    position: absolute;
    top: 15px;
    right: 6px;
    display: flex;
    flex-direction: column;
    align-items: center;
    gap: 8px;
}
.compass {
    width: 50px;
    height: 50px;
    overflow: visible;
}
.compass-text {
    fill: #d2d5d9;
    font-family: "Liberation Sans", sans-serif;
    font-size: 8px;
    font-weight: bold;
}
.face {
    fill: #55595f;
    font-size: 5px;
}
.wcs {
    justify-content: center;
    width: 19px;
    height: 7px;
    border-radius: 2px;
    background-color: #a5a8af;
    color: #dcdee2;
}
.ucs {
    position: absolute;
    left: 0;
    bottom: 3px;
    width: 36px;
    height: 34px;
}
.command {
    position: absolute;
    left: 20%;
    right: 20%;
    bottom: 0;
    font-family: "Liberation Mono", monospace;
}
.history {
    display: flex;
    flex-direction: column;
    align-items: flex-start;
    gap: 2px;
    padding: 0 0 1px 26px;
    line-height: 7px;
}
.history span {
    padding: 0 1px;
    background-color: #5a5e63;
    color: #e0e2e4;
}
.command-bar {
    display: flex;
    align-items: center;
    gap: 3px;
    height: 10px;
    padding-left: 2px;
    color: #e1e4e8;
}
.command-bar > button svg {
    width: 6px;
    height: 6px;
}
.grip {
    width: 2px;
    height: 7px;
    background-color: #656c76;
}
.command-input {
    display: flex;
    flex: 1;
    align-items: center;
    height: 10px;
    padding: 0 2px 0 1px;
    background-color: #b9bcbe;
    color: #444;
}
.command-input input {
    flex: 1;
}
.command-input input::placeholder {
    color: #6f7274;
    font-style: italic;
}

/* Dialog */
.dialog {
    position: absolute;
    top: 31px;
    left: calc(50% - 101px);
    width: 252px;
    overflow: hidden;
    border-radius: 3px;
    background-color: #f0f0f0;
    box-shadow: 0 2px 6px rgba(0, 0, 0, .6);
    color: #222;
    font-family: Roboto, "Liberation Sans", sans-serif;
    line-height: 7px;
}
.dialog-head {
    display: flex;
    align-items: center;
    gap: 3px;
    height: 12px;
    padding: 0 4px;
    background-color: #fff;
    font-family: "Open Sans", "Noto Sans", sans-serif;
}
.dialog-head svg {
    width: 6px;
    height: 6px;
}
.dialog-head button {
    margin-left: auto;
}
.dialog-head button svg {
    width: 5px;
    height: 5px;
}
.dialog-body {
    padding: 2px 4px 4px;
}
.name-field {
    position: relative;
    display: flex;
    flex-direction: column;
    align-items: flex-start;
}
.dialog select {
    appearance: none;
    background: #fff url("data:image/svg+xml,%3Csvg xmlns='http://www.w3.org/2000/svg' viewBox='0 0 8 8'%3E%3Cpath d='m1 3 3 3 3-3' fill='none' stroke='%23666'/%3E%3C/svg%3E") no-repeat right 1px center / 4px 4px;
}
#block-name {
    width: 119px;
    height: 9px;
    border: 1px solid #7ba9c0;
}
.ibeam {
    position: absolute;
    left: 41px;
    top: 8px;
}
.groups {
    display: grid;
    grid-template-columns: 79fr 73fr 80fr;
    gap: 4px;
    margin-top: 3px;
}
fieldset {
    display: flex;
    flex-direction: column;
    min-width: 0;
    margin: 0;
    padding: 3px 3px 1px 5px;
    border: 1px solid #e4e4e4;
}
legend {
    padding: 0 1px;
    margin-left: -4px;
}
.check {
    display: flex;
    align-items: center;
    gap: 1px;
    height: 9px;
    white-space: nowrap;
}
.check input {
    appearance: none;
    flex: none;
    width: 6px;
    height: 6px;
    border: 1px solid #999;
    background-color: #f8f8f8;
}
.check input[type="radio"] {
    border-radius: 50%;
}
.check input[type="radio"]:checked {
    border: 2px solid #185fa8;
    background-color: #fff;
}
.check input[type="checkbox"]:checked {
    border-color: #185fa8;
    background: #185fa8 url("data:image/svg+xml,%3Csvg xmlns='http://www.w3.org/2000/svg' viewBox='0 0 8 8'%3E%3Cpath d='m1 4 2 2 4-4' fill='none' stroke='white'/%3E%3C/svg%3E") center / 4px 4px;
}
.check input:disabled {
    border-color: #ddd;
}
.pick {
    display: flex;
    align-items: center;
    gap: 3px;
    height: 12px;
    margin-left: 1px;
    white-space: nowrap;
}
.pick button {
    justify-content: center;
    width: 10px;
    height: 10px;
    border: 1px solid #dedede;
    background-color: #fafafa;
}
.coord {
    display: flex;
    align-items: center;
    height: 12px;
    padding-left: 1px;
}
.coord label {
    width: 9px;
}
.coord input {
    flex: 1;
    min-width: 0;
    height: 8px;
    padding: 0 1px;
    border-bottom: 1px solid #b5b5b5;
    background-color: #fff;
}
.modes {
    margin-top: 3px;
}
.warn {
    display: flex;
    align-items: center;
    gap: 5px;
    padding-left: 1px;
    white-space: nowrap;
}
.behavior {
    gap: 3px;
    padding-left: 2px;
}
.behavior legend {
    margin-left: -1px;
}
.sub {
    height: 12px;
    padding-left: 9px;
    align-items: flex-start;
    line-height: 6px;
    color: #8d8d8d;
}
.lower {
    display: grid;
    grid-template-columns: 79fr 157fr;
    gap: 4px;
    margin-top: 3px;
}
.settings {
    padding: 0 3px 2px 5px;
}
.settings select {
    height: 9px;
    border-bottom: 1px solid #ddd;
    background-color: #fafafa;
}
.btn {
    justify-content: center;
    height: 9px;
    border: 1px solid #d5d5d5;
    border-radius: 1px;
    background-color: #fdfdfd;
}
.settings .btn {
    margin-top: 4px;
}
.description {
    display: flex;
    flex-direction: column;
    padding-right: 6px;
}
.desc-box {
    display: flex;
    flex: 1;
    border: 1px solid #d0d0d0;
    background-color: #fff;
}
.desc-box textarea {
    flex: 1;
    min-width: 0;
    height: 26px;
    resize: none;
}
.scroll {
    display: flex;
    flex-direction: column;
    justify-content: space-between;
    width: 6px;
    background-color: #f2f2f2;
    color: #777;
    text-align: center;
}
.dialog-foot {
    display: flex;
    align-items: center;
    gap: 4px;
    margin-top: 6px;
}
.dialog-foot .check {
    margin-right: auto;
}
.dialog-foot .btn {
    width: 33px;
}
.dialog-foot .primary {
    border-color: #5a94c8;
}

/* Layout tabs and status bar */
.bottom {
    height: 22px;
    background-color: #222a35;
}
.layout-tabs {
    display: flex;
    height: 9px;
    padding-left: 3px;
    line-height: 10px;
}
.layout-tabs a {
    width: 27px;
    height: 8px;
    text-align: center;
    background-color: #2b333f;
    clip-path: polygon(0 0, 100% 0, calc(100% - 3px) 100%, 3px 100%);
}
.layout-tabs .active {
    background-color: #3f4858;
    color: #fff;
    font-weight: bold;
}
.layout-tabs button {
    padding: 0 4px;
    font-size: 7px;
}
.status {
    display: flex;
    align-items: center;
    justify-content: space-between;
    width: 49%;
    height: 11px;
    margin-left: auto;
    padding: 0 1px 0 6px;
    background-color: #363f4e;
    color: #dce1e7;
    font-family: Roboto, "Liberation Sans", sans-serif;
}
.status button {
    height: 10px;
    padding: 0 1px;
}
.status .off {
    color: #8891a0;
}
.status .on {
    background-color: #4776a6;
    color: #c4e0f8;
}
```
